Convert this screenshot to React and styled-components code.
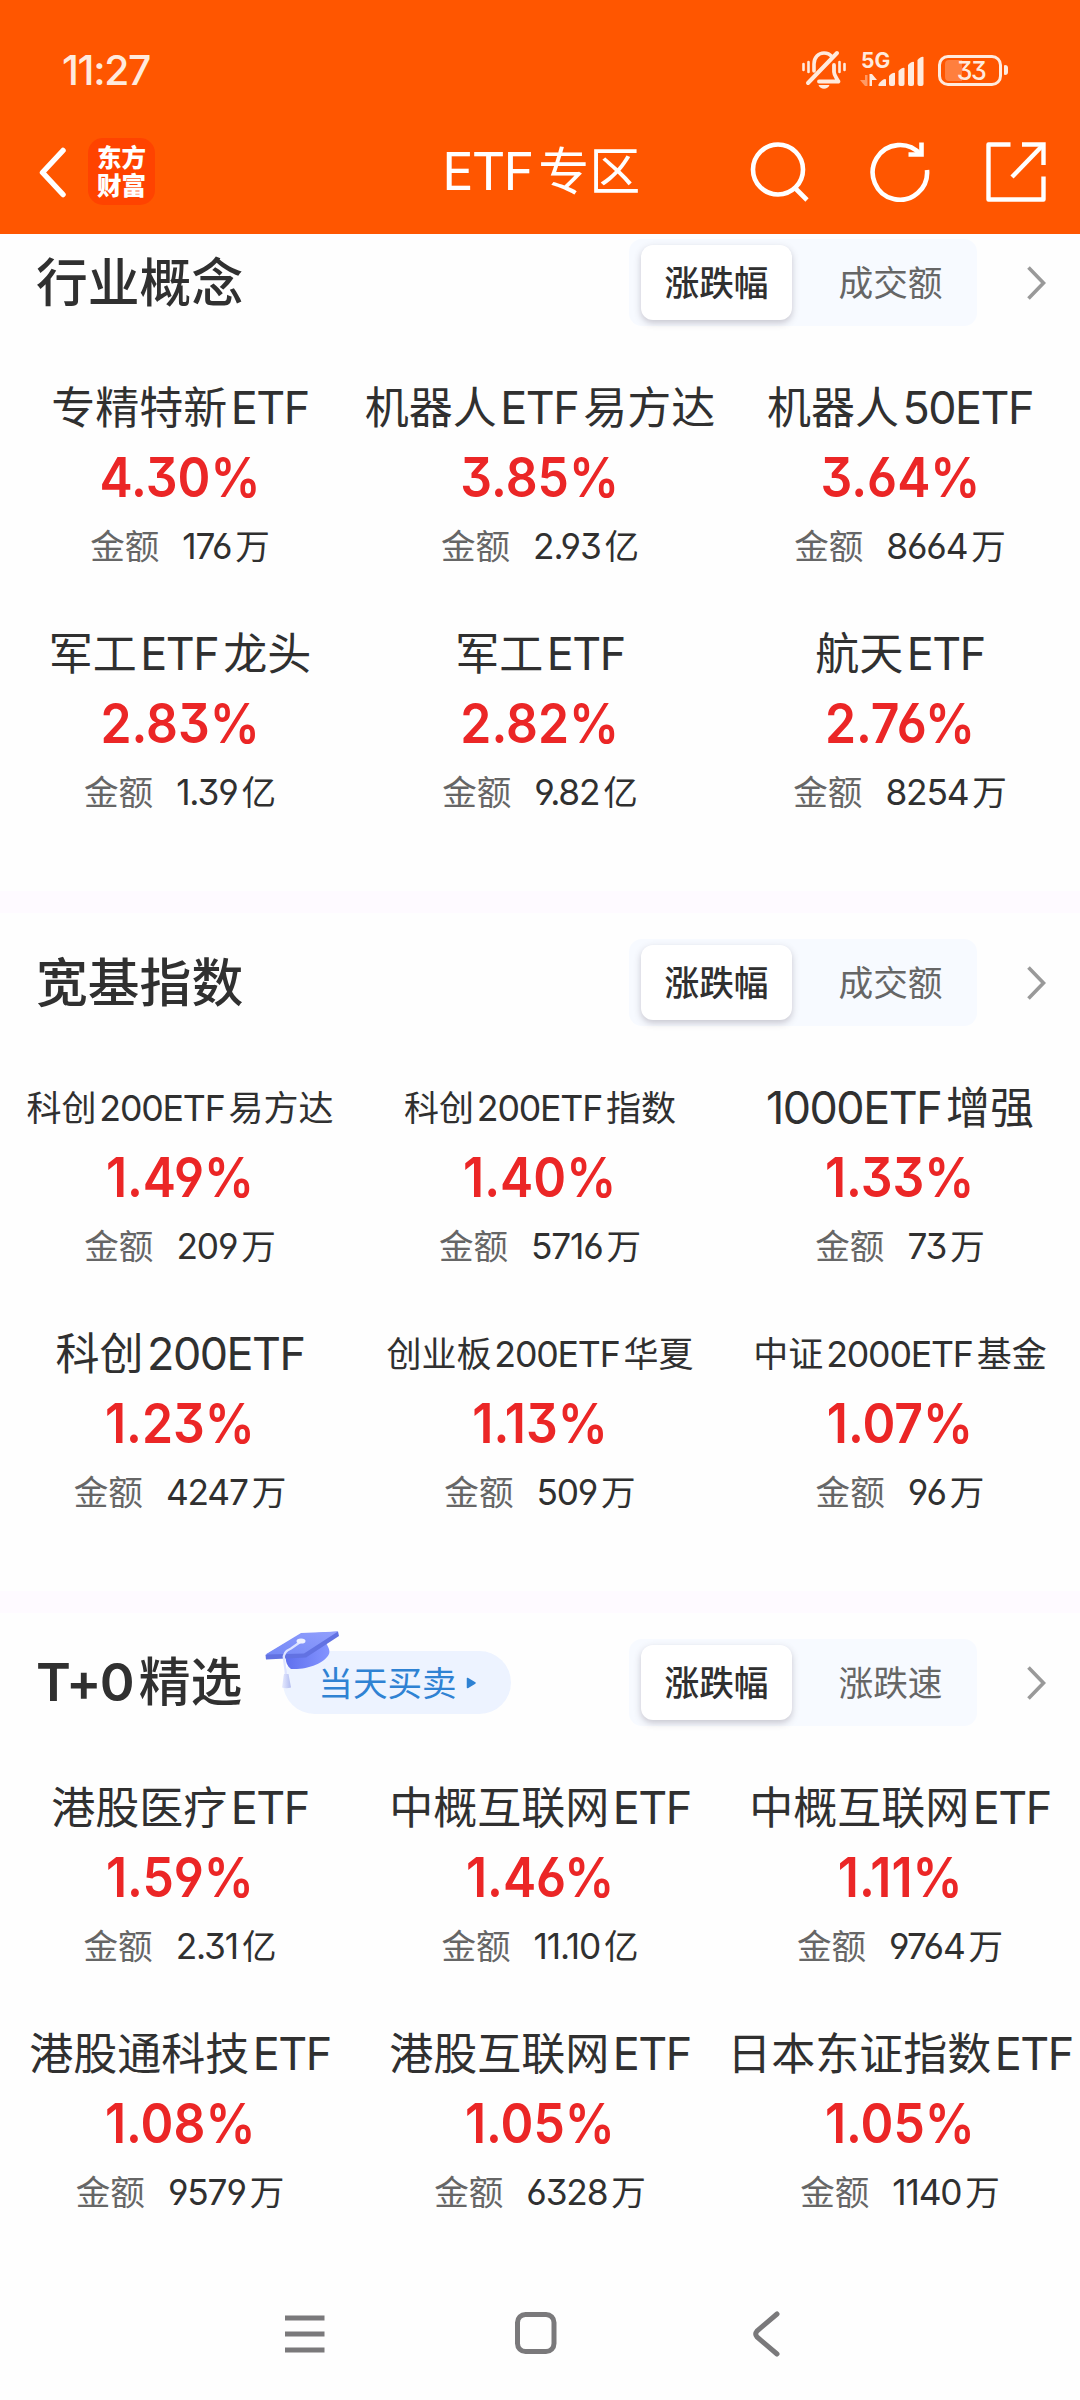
import styled, { createGlobalStyle } from "styled-components";

const GlobalStyle = createGlobalStyle`
  * {
    box-sizing: border-box;
  }
  body {
    margin: 0;
    background: #fefefe;
    font-family: "Noto Sans CJK SC", sans-serif;
    color: #303030;
  }
`;

const Page = styled.div`
  width: 1080px;
  height: 2400px;
  display: flex;
  flex-direction: column;
  overflow: hidden;
`;

const Header = styled.header`
  height: 234px;
  flex-shrink: 0;
  background: #ff5600;
  color: white;
`;

const StatusBar = styled.div`
  height: 138px;
  padding: 2px 78px 0 62px;
  display: flex;
  align-items: center;
  justify-content: space-between;
  color: #ffeadd;
`;

const Time = styled.div`
  font-size: 40px;
  font-weight: 500;
  line-height: 40px;
  padding-bottom: 2px;
`;

const StatusIcons = styled.div`
  display: flex;
  align-items: center;
  svg {
    display: block;
  }
`;

const TitleBar = styled.div`
  height: 68px;
  padding: 0 34.5px 0 39px;
  display: grid;
  grid-template-columns: 1fr auto 1fr;
  grid-template-rows: 67px;
  align-items: center;
  svg {
    display: block;
  }
`;

const BarSide = styled.div`
  display: flex;
  align-items: center;
  justify-content: ${(props) => (props.end ? "flex-end" : "flex-start")};
  gap: ${(props) => props.gap};
`;

const Logo = styled.div`
  width: 67px;
  height: 67px;
  border-radius: 15px;
  background: #ff4300;
  font-size: 24.5px;
  font-weight: 900;
  line-height: 28px;
  padding-top: 5px;
  text-align: center;
`;

const PageTitle = styled.h1`
  margin: 0 2px 0 0;
  padding-bottom: 4px;
  font-size: 51px;
  font-weight: 400;
  line-height: 64px;
`;

const Section = styled.section`
  height: ${(props) => props.height};
  padding-top: ${(props) => (props.first ? "5px" : "26px")};
  border-bottom: ${(props) => (props.last ? "0" : "22px solid #fefaff")};
  flex-shrink: 0;
`;

const SectionHead = styled.div`
  height: 87px;
  padding: 0 34px 0 36px;
  display: flex;
  align-items: center;
`;

const SectionTitle = styled.h2`
  margin: 0;
  padding-bottom: 5px;
  font-size: 51.8px;
  font-weight: 500;
  line-height: 82px;
  span {
    font-weight: 600;
  }
`;

const Badge = styled.div`
  position: relative;
  width: 228px;
  height: 63px;
  margin-left: 41px;
  padding-left: 35px;
  border-radius: 32px;
  background: #edf3ff;
  color: #2f82d3;
  font-size: 34.6px;
  line-height: 60px;
  display: flex;
  align-items: center;
  gap: 9px;
`;

const BadgeText = styled.em`
  font-style: normal;
  padding-bottom: 3px;
`;

const CapIcon = styled.svg`
  position: absolute;
  left: -18px;
  top: -20px;
`;

const Tabs = styled.div`
  width: 348px;
  height: 87px;
  margin-left: auto;
  padding: 6px 0 6px 12px;
  border-radius: 13px;
  background: #f7faff;
  display: flex;
`;

const Tab = styled.div`
  font-size: 34.7px;
  line-height: 73px;
  text-align: center;
  color: #666;
  flex: 1;
  padding-left: 12px;
`;

const ActiveTab = styled(Tab)`
  flex: 0 0 151px;
  padding: 0;
  border-radius: 12px;
  background: white;
  color: #303030;
  font-weight: 500;
  box-shadow: 0 3px 7px rgba(60, 50, 70, 0.26);
`;

const MoreArrow = styled.svg`
  margin-left: 49px;
`;

const Grid = styled.div`
  display: grid;
  grid-template-columns: repeat(3, 360px);
  grid-auto-rows: 246px;
  padding-top: 43px;
`;

const Cell = styled.div`
  display: flex;
  flex-direction: column;
  align-items: center;
  white-space: nowrap;
`;

const Name = styled.div`
  font-size: ${(props) => (props.small ? "35px" : "44px")};
  line-height: ${(props) => (props.small ? "73px" : "72px")};
  height: 72px;
`;

const Percent = styled.div`
  font-family: Inter, sans-serif;
  font-size: 54.5px;
  font-weight: 600;
  font-feature-settings: "cv09", "cv03", "cv04";
  line-height: 72px;
  color: #eb2626;
  transform: scaleX(0.915);
`;

const Amount = styled.div`
  font-size: 34.6px;
  line-height: 62px;
  display: flex;
  gap: 23px;
`;

const AmountLabel = styled.span`
  color: #666;
`;

const LatinRun = styled.span`
  font-family: Inter, sans-serif;
  font-feature-settings: "cv09", "cv03", "cv04";
  font-size: 1.02em;
  letter-spacing: -0.033em;
  margin-left: ${(props) => (props.lead ? "0.08em" : "0")};
  margin-right: ${(props) => (props.trail ? "0.11em" : "0")};
`;

const NavBar = styled.nav`
  flex: 1;
  padding-left: 285px;
  display: flex;
  svg {
    display: block;
  }
`;

// latin and digits get some air next to chinese characters
function Mixed({ text }) {
  const runs = text.match(/[\x20-\x7e]+|[^\x20-\x7e]+/g);
  return runs.map((run, i) =>
    /[\x20-\x7e]/.test(run) ? (
      <LatinRun key={i} lead={i > 0 ? 1 : 0} trail={i < runs.length - 1 ? 1 : 0}>
        {run}
      </LatinRun>
    ) : (
      run
    )
  );
}

const sections = [
  {
    title: "行业概念",
    height: "679px",
    tabs: ["涨跌幅", "成交额"],
    items: [
      ["专精特新ETF", "4.30%", "176万"],
      ["机器人ETF易方达", "3.85%", "2.93亿"],
      ["机器人50ETF", "3.64%", "8664万"],
      ["军工ETF龙头", "2.83%", "1.39亿"],
      ["军工ETF", "2.82%", "9.82亿"],
      ["航天ETF", "2.76%", "8254万"],
    ],
  },
  {
    title: "宽基指数",
    height: "700px",
    tabs: ["涨跌幅", "成交额"],
    items: [
      ["科创200ETF易方达", "1.49%", "209万", true],
      ["科创200ETF指数", "1.40%", "5716万", true],
      ["1000ETF增强", "1.33%", "73万"],
      ["科创200ETF", "1.23%", "4247万"],
      ["创业板200ETF华夏", "1.13%", "509万", true],
      ["中证2000ETF基金", "1.07%", "96万", true],
    ],
  },
  {
    title: "T+0精选",
    height: "690px",
    badge: "当天买卖",
    tabs: ["涨跌幅", "涨跌速"],
    items: [
      ["港股医疗ETF", "1.59%", "2.31亿"],
      ["中概互联网ETF", "1.46%", "11.10亿"],
      ["中概互联网ETF", "1.11%", "9764万"],
      ["港股通科技ETF", "1.08%", "9579万"],
      ["港股互联网ETF", "1.05%", "6328万"],
      ["日本东证指数ETF", "1.05%", "1140万"],
    ],
  },
];

const SignalText = styled.div`
  font-family: Inter, sans-serif;
  font-size: 21px;
  font-weight: 700;
  line-height: 18px;
  height: 20px;
  padding-left: 1px;
`;

const Signal = styled.div`
  width: 64px;
  height: 36px;
  margin-left: 14px;
  position: relative;
  svg {
    position: absolute;
    left: 0;
    top: 0;
  }
`;

const Battery = styled.div`
  width: 64px;
  height: 31px;
  margin-left: 14px;
  border: 3px solid #ffeadd;
  border-radius: 10px;
  position: relative;
  font-family: Inter, sans-serif;
  font-feature-settings: "cv09";
  font-size: 25px;
  font-weight: 500;
  letter-spacing: -1.5px;
  line-height: 26px;
  text-align: center;
  padding-left: 2px;
  &::before {
    content: "";
    position: absolute;
    left: 4px;
    top: 2px;
    width: 17px;
    height: 21px;
    border-radius: 4px 0 0 4px;
    background: rgba(255, 234, 221, 0.28);
  }
  &::after {
    content: "";
    position: absolute;
    right: -9px;
    top: 7.5px;
    width: 4.5px;
    height: 10px;
    border-radius: 1px 3px 3px 1px;
    background: #ffeadd;
  }
`;

function MutedBell() {
  return (
    <svg width="44" height="40" viewBox="0 0 44 40" fill="none" stroke="#ffeadd" strokeLinecap="round">
      <path d="M1.500 14v6M6.500 12v10M37.500 12v10M42.500 14v6" strokeWidth="2.600" />
      <path d="M12 21v-7c0-6.500 4.500-11 10-11c3 0 6 1.300 7.800 3.600" strokeWidth="3.600" />
      <path d="M35 3L6 33" strokeWidth="4" />
      <path d="M32 15v7c0 3 2 5 4.500 9.500H17" strokeWidth="3.800" strokeLinejoin="round" />
      <path d="M16.500 35h11c-1 2.500-3 3.800-5.500 3.800s-4.500-1.300-5.500-3.800z" fill="#ffeadd" stroke="none" />
    </svg>
  );
}

function GradCap() {
  return (
    <CapIcon width="76" height="60" viewBox="0 0 76 60">
      <defs>
        <linearGradient id="top" x1="0" y1="1" x2="1" y2="0">
          <stop offset="0" stopColor="#7488f6" />
          <stop offset="1" stopColor="#929ffd" />
        </linearGradient>
        <linearGradient id="base" x1="0" y1="0" x2="1" y2="0">
          <stop offset="0" stopColor="#5f70ee" />
          <stop offset="1" stopColor="#8494ff" />
        </linearGradient>
        <linearGradient id="tassel" x1="0" y1="0" x2="1" y2="0">
          <stop offset="0" stopColor="#e6eaff" />
          <stop offset="1" stopColor="#b3bdf0" />
        </linearGradient>
      </defs>
      <path d="M21 24L61 12C64 17 65 20 64 23C60 32 42 39 26 38C22 35 20 30 21 24z" fill="url(#base)" />
      <path d="M0.500 24L36 3L73 0.500L74 5L41 26.500L1 28.500z" fill="#6272e2" />
      <path d="M0.500 23.500L36 2L73 0.500L39 22.500z" fill="url(#top)" />
      <path d="M36 10.500L26 17.500C20 20 18 23 19 28L21 43" fill="none" stroke="#dde3ff" strokeWidth="2.200" />
      <ellipse cx="36" cy="10" rx="4.500" ry="2.600" fill="#eef1ff" />
      <path d="M19 43h4.500l2.500 13.500q-4.500 1.500-9 0z" fill="url(#tassel)" />
    </CapIcon>
  );
}

function App() {
  return (
    <Page>
      <GlobalStyle />
      <Header>
        <StatusBar>
          <Time>
            <Mixed text="11:27" />
          </Time>
          <StatusIcons>
            <MutedBell />
            <Signal>
              <SignalText>5G</SignalText>
              <svg width="64" height="36" viewBox="0 0 64 36" fill="#ffeadd">
                <path d="M5 23v11h2.500V23zM0 28l5 6V28z" opacity="0.45" />
                <path d="M9.500 22v12h2.500V22zM12 22l5 6h-5z" />
                <path d="M19 34q-1 0-.5-1.500q3-5 6.500-5.500q1 0 1 1v6z" />
                <path d="M29 24q4-4 6-3v11q0 2-2 2h-2q-2 0-2-2z" />
                <path d="M38.500 19q4-4 6-3v16q0 2-2 2h-2q-2 0-2-2z" />
                <path d="M48 13q4-4 6-3v22q0 2-2 2h-2q-2 0-2-2z" />
                <path d="M57.500 8q4-4 6-3v27q0 2-2 2h-2q-2 0-2-2z" />
              </svg>
            </Signal>
            <Battery>33</Battery>
          </StatusIcons>
        </StatusBar>
        <TitleBar>
          <BarSide gap="22px">
            <svg width="27" height="52" viewBox="0 0 27 52" fill="none" stroke="white" strokeWidth="5.500" strokeLinecap="round" strokeLinejoin="round">
              <path d="M24 4.500L3.500 26.500L24 48.500" />
            </svg>
            <Logo>
              东方
              <br />
              财富
            </Logo>
          </BarSide>
          <PageTitle>
            <Mixed text="ETF专区" />
          </PageTitle>
          <BarSide end={1} gap="56px">
            <svg width="64" height="60" viewBox="0 0 64 60" fill="none" stroke="white" strokeWidth="4.600">
              <circle cx="28" cy="27.500" r="25" />
              <path d="M44.500 45.500L57 58" />
            </svg>
            <svg width="60" height="60" viewBox="0 0 60 60" fill="none" stroke="white" strokeWidth="4.600">
              <path d="M57 28A27.200 27.400 0 1 1 50.500 12.500" />
              <path d="M51.500 0.500V12.500H38.500" />
            </svg>
            <svg width="60" height="60" viewBox="0 0 60 60" fill="none" stroke="white" strokeWidth="4.400" strokeLinejoin="round">
              <path d="M24.500 2.500H2.500V57.500H57.500V34.500" />
              <path d="M36 2.500H57.500V23" strokeLinejoin="miter" />
              <path d="M57 3L26 35" />
            </svg>
          </BarSide>
        </TitleBar>
      </Header>
      {sections.map((section, i) => (
        <Section key={section.title} height={section.height} first={i === 0 ? 1 : 0} last={i === 2 ? 1 : 0}>
          <SectionHead>
            <SectionTitle>
              <Mixed text={section.title} />
            </SectionTitle>
            {section.badge && (
              <Badge>
                <GradCap />
                <BadgeText>{section.badge}</BadgeText>
                <svg width="11" height="12" viewBox="0 0 11 12" fill="#2f82d3" stroke="#2f82d3" strokeLinejoin="round">
                  <path d="M1.500 1.500v9l7.500-4.500z" strokeWidth="1.500" />
                </svg>
              </Badge>
            )}
            <Tabs>
              <ActiveTab>{section.tabs[0]}</ActiveTab>
              <Tab>{section.tabs[1]}</Tab>
            </Tabs>
            <MoreArrow width="20" height="36" viewBox="0 0 20 36" fill="none" stroke="#999" strokeWidth="3.600">
              <path d="M2.500 2.500L17.500 18L2.500 33.500" />
            </MoreArrow>
          </SectionHead>
          <Grid>
            {section.items.map(([name, percent, amount, small], j) => (
              <Cell key={j}>
                <Name small={small ? 1 : 0}>
                  <Mixed text={name} />
                </Name>
                <Percent>{percent}</Percent>
                <Amount>
                  <AmountLabel>金额</AmountLabel>
                  <span>
                    <Mixed text={amount} />
                  </span>
                </Amount>
              </Cell>
            ))}
          </Grid>
        </Section>
      ))}
      <NavBar>
        <svg width="510" height="60" viewBox="0 0 510 60" fill="none" stroke="#7a797b" strokeWidth="5">
          <path d="M0 15h39.500M0 31h39.500M0 47h39.500" />
          <rect x="232.500" y="11.500" width="36.500" height="37" rx="8" />
          <path d="M492 11L472 28Q469.500 31 472 34L492 51" strokeLinecap="round" />
        </svg>
      </NavBar>
    </Page>
  );
}

export default App;
